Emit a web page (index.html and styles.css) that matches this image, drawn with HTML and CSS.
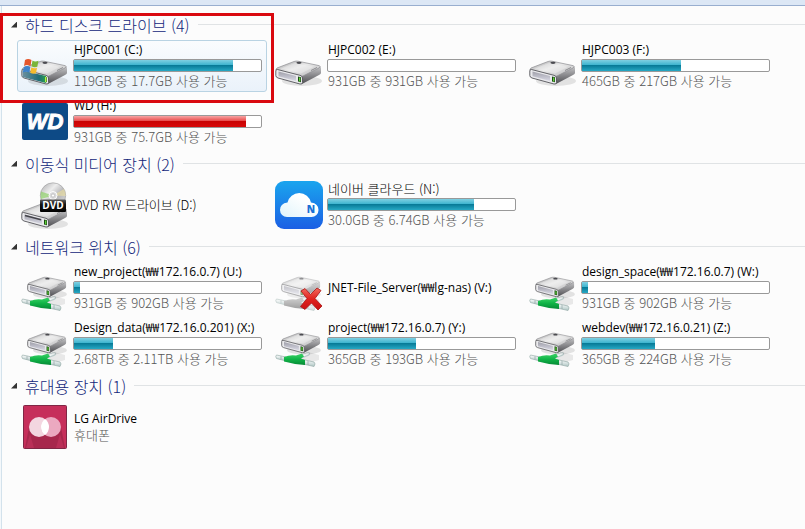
FILE: index.html
```html
<!DOCTYPE html>
<html lang="ko">
<head>
    <meta charset="UTF-8">
    <meta name="viewport" content="width=device-width, initial-scale=1.0">
    <title>컴퓨터</title>
    <link rel="stylesheet" href="styles.css">
</head>
<body>
    <!-- Shared icons -->
    <svg class="defs" aria-hidden="true">
        <defs>
            <linearGradient id="topFace" x1="0" y1="0" x2="1" y2="1">
                <stop offset="0" stop-color="#a4a4a6"/>
                <stop offset=".45" stop-color="#e9e9e9"/>
                <stop offset="1" stop-color="#b4b4b6"/>
            </linearGradient>
            <linearGradient id="sideFace" x1="0" y1="0" x2="0" y2="1">
                <stop offset="0" stop-color="#c9c9cb"/>
                <stop offset=".5" stop-color="#8b8b8e"/>
                <stop offset="1" stop-color="#4e4e52"/>
            </linearGradient>
            <linearGradient id="frontFace" x1="0" y1="0" x2="0" y2="1">
                <stop offset="0" stop-color="#a0a0aa"/>
                <stop offset="1" stop-color="#d8d8e4"/>
            </linearGradient>
            <linearGradient id="systemFace" x1="0" y1="0" x2="1" y2="0">
                <stop offset="0" stop-color="#6c8f9f"/>
                <stop offset=".7" stop-color="#1f6d78"/>
                <stop offset="1" stop-color="#2ba04c"/>
            </linearGradient>
            <linearGradient id="cable" x1="0" y1="0" x2="0" y2="1">
                <stop offset="0" stop-color="#3ed468"/>
                <stop offset=".5" stop-color="#10b447"/>
                <stop offset="1" stop-color="#078a37"/>
            </linearGradient>
            <linearGradient id="cableOff" x1="0" y1="0" x2="0" y2="1">
                <stop offset="0" stop-color="#b5b5b5"/>
                <stop offset="1" stop-color="#606060"/>
            </linearGradient>
            <linearGradient id="plug" x1="0" y1="0" x2="0" y2="1">
                <stop offset="0" stop-color="#ffffff"/>
                <stop offset="1" stop-color="#afc6c4"/>
            </linearGradient>
            <linearGradient id="disc" x1="0" y1="0" x2="1" y2="1">
                <stop offset="0" stop-color="#a8a8aa"/>
                <stop offset=".35" stop-color="#ededed"/>
                <stop offset=".6" stop-color="#b4b4b6"/>
                <stop offset="1" stop-color="#e8e8e8"/>
            </linearGradient>
            <linearGradient id="label" x1="0" y1="0" x2="0" y2="1">
                <stop offset="0" stop-color="#5d5d5d"/>
                <stop offset=".4" stop-color="#141414"/>
                <stop offset="1" stop-color="#000000"/>
            </linearGradient>
            <linearGradient id="naver" x1="0" y1="0" x2="0" y2="1">
                <stop offset="0" stop-color="#1aa5ee"/>
                <stop offset="1" stop-color="#1b5fe4"/>
            </linearGradient>
            <linearGradient id="cloud" x1="1" y1="0" x2="0" y2="1">
                <stop offset=".3" stop-color="#ffffff"/>
                <stop offset="1" stop-color="#dff4fb"/>
            </linearGradient>
            <linearGradient id="cross" x1="0" y1="0" x2="0" y2="1">
                <stop offset="0" stop-color="#f26a5e"/>
                <stop offset=".5" stop-color="#e0241f"/>
                <stop offset="1" stop-color="#c90f10"/>
            </linearGradient>
        </defs>

        <symbol id="drive" viewBox="0 0 48 48">
            <ellipse cx="27" cy="39" rx="20" ry="5" fill="#000" opacity=".1"/>
            <path d="M26 33L44 24Q46 24 46 26V31Q46 32 44 33L27 42Q25 42 25 40Z" fill="url(#sideFace)"/>
            <path d="M2 26L19 19.500Q21 18.800 23 19.200L44 23.600Q46.500 24.500 44 26L28 34Q26 35 24 34.500L2 29Q0 27.500 2 26Z" fill="url(#topFace)" stroke="#8c8c90" stroke-width=".7"/>
            <path d="M6 26.400L20 21L39 24.800L26 31.400Z" fill="#f6f6f6" opacity=".4"/>
            <ellipse cx="24" cy="20.800" rx="2.600" ry="1.100" fill="#4b4b50"/>
            <path d="M36 28.500L42 25.500" stroke="#77777b" stroke-width=".8"/>
            <path d="M2.500 27.500L25 33.300Q27.500 34 27.500 36V40.500Q27.500 42.500 25 42L3 36Q.8 35.300 .8 33.500V29Q.8 27.200 2.500 27.500Z" fill="#e9e9ec" stroke="#55555a" stroke-width=".9"/>
            <path d="M3.500 29.500L21 34V39L3.500 34.300Z" fill="url(#frontFace)"/>
            <path d="M23 34.500L26 35.200V40.300L23 39.600Z" fill="#1d4a17"/>
            <path d="M24.700 35.500V39.500" stroke="#68e03c" stroke-width="1.200"/>
        </symbol>

        <symbol id="system-drive" viewBox="0 0 48 48">
            <use href="#drive"/>
            <path d="M1.500 28.500L25 34V41L1.500 35Z" fill="url(#systemFace)"/>
            <path d="M24.700 35V40" stroke="#b6f04a" stroke-width="1.400"/>
            <path d="M4 18Q7 16 10.500 18L9.500 24Q6.500 22.200 3 24Z" fill="#e5562b"/>
            <path d="M11.500 18.500Q14 20.200 17.500 18.800L16.300 24.800Q13.500 26 10.500 24.300Z" fill="#7bb53a"/>
            <path d="M2.800 25Q6 23.200 9.300 25L8.300 30.500Q5 29 1.800 30.500Z" fill="#3f83cb"/>
            <path d="M10.300 25.500Q13 27 16 25.800L15 31.300Q12 32.500 9.300 30.800Z" fill="#f5bb2d"/>
        </symbol>

        <symbol id="plugs" viewBox="0 0 48 48">
            <path d="M22 36L33 32L44 35L44 40L34 43Z" fill="#000" opacity=".08"/>
            <path d="M25 37L33 34" stroke="#b8c9c8" stroke-width="4" stroke-linecap="round"/>
            <path d="M26 36.300L33 33.600" stroke="#f3f8f8" stroke-width="2" stroke-linecap="round"/>
            <path d="M1.500 35L11 37V41L1.500 38.500Q0 36.500 1.500 35Z" fill="url(#plug)" stroke="#98adab" stroke-width=".7"/>
            <path d="M28 39.500L39 42Q41 43.500 39 46.500L28 44Z" fill="url(#plug)" stroke="#98adab" stroke-width=".7"/>
            <path d="M33 41V45M6 36.300V39.500" stroke="#8fa5a3" stroke-width=".7"/>
        </symbol>

        <symbol id="network-drive" viewBox="0 0 48 48">
            <use href="#plugs"/>
            <path d="M9 37Q15 34.500 21 35.500L27 33.500L29 36.500L26 38.500L30 40V45L20 44L9 41.500Z" fill="url(#cable)"/>
            <use href="#drive" transform="translate(6 -3) scale(.85)"/>
        </symbol>

        <symbol id="offline-drive" viewBox="0 0 48 48">
            <g opacity=".6">
                <use href="#plugs"/>
                <path d="M9 37Q15 34.500 21 35.500L27 33.500L29 36.500L26 38.500L30 40V45L20 44L9 41.500Z" fill="url(#cableOff)"/>
                <use href="#drive" transform="translate(6 -3) scale(.85)"/>
            </g>
            <path d="M26 27L30 24.500L35.500 30.500L42 24L46 26.500L40 34.500L47 42L43 46L36.500 39L30 45.500L25.500 42.500L32 34.500Z" fill="url(#cross)" stroke="#a81414" stroke-width=".8" stroke-linejoin="round"/>
        </symbol>

        <symbol id="airdrive" viewBox="0 0 48 48">
            <rect x="2.500" y="2.500" width="43" height="43" rx="1" fill="#c62f5b" stroke="#7f2745"/>
            <path d="M8 24H40L44 45H4Z" fill="#a7284d"/>
            <path d="M5 45L9 31L13 45ZM35 45L39 31L43 45Z" fill="#b93058"/>
            <circle cx="18" cy="24" r="10" fill="#f3d6e0"/>
            <circle cx="30" cy="24" r="10" fill="#eba9c0"/>
            <path d="M24 16A10 10 0 0 1 24 32A10 10 0 0 1 24 16Z" fill="#ffffff"/>
        </symbol>
    </svg>

    <div class="toolbar"></div>
    <main class="content">
        <details class="group" open>
            <summary>하드 디스크 드라이브 (4)</summary>
            <div class="tiles">
                <div class="tile selected">
                    <svg class="icon"><use href="#system-drive"/></svg>
                    <div class="info">
                        <div class="name">HJPC001 (C:)</div>
                        <div class="bar"><div class="fill" style="width: 85%"></div></div>
                        <div class="detail">119GB 중 17.7GB 사용 가능</div>
                    </div>
                </div>
                <div class="tile">
                    <svg class="icon"><use href="#drive"/></svg>
                    <div class="info">
                        <div class="name">HJPC002 (E:)</div>
                        <div class="bar"></div>
                        <div class="detail">931GB 중 931GB 사용 가능</div>
                    </div>
                </div>
                <div class="tile">
                    <svg class="icon"><use href="#drive"/></svg>
                    <div class="info">
                        <div class="name">HJPC003 (F:)</div>
                        <div class="bar"><div class="fill" style="width: 53%"></div></div>
                        <div class="detail">465GB 중 217GB 사용 가능</div>
                    </div>
                </div>
                <div class="tile">
                    <svg class="icon" viewBox="0 0 48 48">
                        <rect x="1" y="5" width="46" height="37" rx="2" fill="#0d4a86"/>
                        <text class="wd-text" x="24" y="31" text-anchor="middle">WD</text>
                    </svg>
                    <div class="info">
                        <div class="name">WD (H:)</div>
                        <div class="bar"><div class="fill full" style="width: 92%"></div></div>
                        <div class="detail">931GB 중 75.7GB 사용 가능</div>
                    </div>
                </div>
            </div>
        </details>

        <details class="group" open>
            <summary>이동식 미디어 장치 (2)</summary>
            <div class="tiles">
                <div class="tile">
                    <svg class="icon" viewBox="0 0 48 48">
                        <use href="#drive" width="48" height="48" transform="translate(0 4)"/>
                        <path d="M4 34.500L20 38.800" stroke="#44444a" stroke-width="1.400"/>
                        <circle cx="32" cy="14.500" r="12.700" fill="url(#disc)" stroke="#9a9a9c" stroke-width=".6"/>
                        <path d="M32 14.500L20 10.500Q19 14 20 18Z" fill="#8fd069" opacity=".7"/>
                        <path d="M32 14.500L43 8Q45 12 44.500 15Z" fill="#f0e3a0" opacity=".6"/>
                        <circle cx="32" cy="14.500" r="4" fill="#dadadc" stroke="#ffffff"/>
                        <circle cx="32" cy="14.500" r="1.600" fill="#ffffff" stroke="#a0a0a2" stroke-width=".5"/>
                        <rect x="19" y="18.500" width="26" height="12.500" rx="1" fill="url(#label)"/>
                        <text class="dvd-text" x="32" y="28" text-anchor="middle">DVD</text>
                    </svg>
                    <div class="info">
                        <div class="name hangul">DVD RW 드라이브 (D:)</div>
                    </div>
                </div>
                <div class="tile">
                    <svg class="icon" viewBox="0 0 48 48">
                        <rect width="48" height="48" rx="9" fill="url(#naver)"/>
                        <path d="M12 36A7 7 0 0 1 5 29Q5 22.500 12.500 21.500A12 12 0 0 1 36 21.500Q43.500 22.500 43.500 29A7 7 0 0 1 36.500 36Z" fill="url(#cloud)"/>
                        <text class="naver-text" x="36" y="32" text-anchor="middle">N</text>
                    </svg>
                    <div class="info">
                        <div class="name hangul">네이버 클라우드 (N:)</div>
                        <div class="bar"><div class="fill" style="width: 78%"></div></div>
                        <div class="detail">30.0GB 중 6.74GB 사용 가능</div>
                    </div>
                </div>
            </div>
        </details>

        <details class="group" open>
            <summary>네트워크 위치 (6)</summary>
            <div class="tiles">
                <div class="tile">
                    <svg class="icon"><use href="#network-drive"/></svg>
                    <div class="info">
                        <div class="name">new_project(₩₩172.16.0.7) (U:)</div>
                        <div class="bar"><div class="fill" style="width: 3%"></div></div>
                        <div class="detail">931GB 중 902GB 사용 가능</div>
                    </div>
                </div>
                <div class="tile">
                    <svg class="icon"><use href="#offline-drive"/></svg>
                    <div class="info">
                        <div class="name">JNET-File_Server(₩₩lg-nas) (V:)</div>
                    </div>
                </div>
                <div class="tile">
                    <svg class="icon"><use href="#network-drive"/></svg>
                    <div class="info">
                        <div class="name">design_space(₩₩172.16.0.7) (W:)</div>
                        <div class="bar"><div class="fill" style="width: 3%"></div></div>
                        <div class="detail">931GB 중 902GB 사용 가능</div>
                    </div>
                </div>
                <div class="tile">
                    <svg class="icon"><use href="#network-drive"/></svg>
                    <div class="info">
                        <div class="name">Design_data(₩₩172.16.0.201) (X:)</div>
                        <div class="bar"><div class="fill" style="width: 21%"></div></div>
                        <div class="detail">2.68TB 중 2.11TB 사용 가능</div>
                    </div>
                </div>
                <div class="tile">
                    <svg class="icon"><use href="#network-drive"/></svg>
                    <div class="info">
                        <div class="name">project(₩₩172.16.0.7) (Y:)</div>
                        <div class="bar"><div class="fill" style="width: 47%"></div></div>
                        <div class="detail">365GB 중 193GB 사용 가능</div>
                    </div>
                </div>
                <div class="tile">
                    <svg class="icon"><use href="#network-drive"/></svg>
                    <div class="info">
                        <div class="name">webdev(₩₩172.16.0.21) (Z:)</div>
                        <div class="bar"><div class="fill" style="width: 39%"></div></div>
                        <div class="detail">365GB 중 224GB 사용 가능</div>
                    </div>
                </div>
            </div>
        </details>

        <details class="group" open>
            <summary>휴대용 장치 (1)</summary>
            <div class="tiles">
                <div class="tile">
                    <svg class="icon"><use href="#airdrive"/></svg>
                    <div class="info">
                        <div class="name">LG AirDrive</div>
                        <div class="detail">휴대폰</div>
                    </div>
                </div>
            </div>
        </details>
    </main>
    <div class="highlight"></div>
</body>
</html>
```

FILE: styles.css
```css
* {
    box-sizing: border-box;
}
body {
    display: flex;
    flex-direction: column;
    position: relative;
    min-height: 100vh;
    margin: 0;
    background: #f4f8fb;
    font-family: "Noto Sans CJK KR", sans-serif;
    font-size: 13px;
    font-weight: 300;
    color: #000;
}
.defs {
    position: absolute;
    width: 0;
    height: 0;
}
.toolbar {
    height: 6px;
    background: #dce7f5;
    border-bottom: 1px solid #98aecf;
}
.content {
    flex: 1;
    margin-left: 1px;
    padding: 3px 0 16px;
    background: #fcfcfc;
    border-left: 1px solid #d3e2ec;
}

/* Group headers */
summary {
    display: flex;
    align-items: center;
    gap: 8px;
    height: 31px;
    padding-left: 9px;
    font-size: 16px;
    line-height: 20px;
    color: #12267a;
    list-style: none;
    cursor: pointer;
}
summary::before {
    content: "";
    width: 6px;
    height: 6px;
    background: #333;
    clip-path: polygon(100% 0, 100% 100%, 0 100%);
}
summary::after {
    content: "";
    flex: 1;
    height: 1px;
    background: #e0e3e5;
}

/* Drive tiles */
.tiles {
    display: grid;
    grid-template-columns: repeat(auto-fill, 250px);
    gap: 4px;
    padding-left: 15px;
}
.tile {
    display: flex;
    align-items: center;
    gap: 4px;
    height: 52px;
    padding: 0 4px 1px 3px;
    border: 1px solid transparent;
    border-radius: 3px;
}
.tile.selected {
    background: linear-gradient(#fafcfe, #eaf2fa);
    border-color: #b9d3e3;
}
.icon {
    flex: none;
    align-self: flex-end;
    width: 48px;
    height: 48px;
}
.info {
    flex: 1;
    min-width: 0;
}
.name,
.detail {
    padding-left: 1px;
    line-height: 17px;
    white-space: nowrap;
}
.name {
    font-family: "Open Sans", "Noto Sans CJK KR", sans-serif;
    font-size: 12px;
    font-weight: 400;
}
.name.hangul {
    font-family: "Noto Sans CJK KR", sans-serif;
    font-size: 13px;
    font-weight: 300;
}
.detail {
    padding-bottom: 2px;
    line-height: 15px;
    color: #555;
}
.bar {
    height: 13px;
    margin: 1px 0;
    background: #fff;
    border: 1px solid #999;
    border-radius: 2px;
}
.fill {
    height: 100%;
    background: linear-gradient(#7fd0e2, #3db4cf 45%, #087b98 50%, #26a8c4);
}
.fill.full {
    background: linear-gradient(#f7a3a3, #e84a4a 45%, #c90404 50%, #d80a0a);
}

/* Icon lettering */
.dvd-text {
    font: bold 10px "Open Sans", sans-serif;
    fill: #fff;
}
.wd-text {
    font: italic bold 22px "Liberation Sans", sans-serif;
    fill: #fff;
    stroke: #fff;
}
.naver-text {
    font: 800 10px "Open Sans", sans-serif;
    fill: #1a70d4;
}

.highlight {
    position: absolute;
    top: 13px;
    left: 0;
    width: 274px;
    height: 90px;
    border: 3px solid #d9090f;
    pointer-events: none;
}
```
